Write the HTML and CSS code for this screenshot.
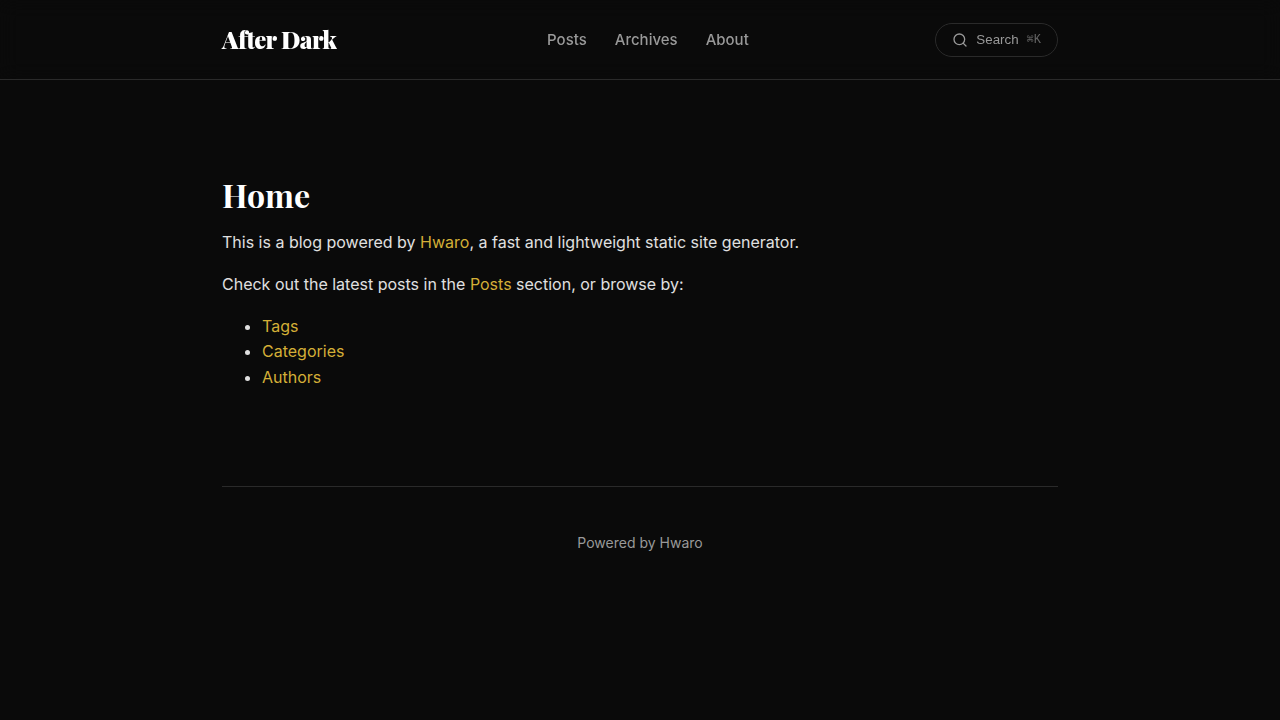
FILE: index.html
```html
<!DOCTYPE html>
<html lang="en">
<head>
    <meta charset="UTF-8">
    <meta name="viewport" content="width=device-width, initial-scale=1.0">
    <title>Home - After Dark</title>
    <link rel="stylesheet" href="styles.css">
</head>
<body>
    <header class="site-header">
        <div class="header-inner">
            <a href="#" class="site-title">After Dark</a>
            <nav class="site-nav">
                <a href="#posts">Posts</a>
                <a href="#archives">Archives</a>
                <a href="#about">About</a>
            </nav>
            <button type="button" class="search-btn">
                <svg width="16" height="16" viewBox="0 0 24 24" fill="none" stroke="currentColor" stroke-width="2" stroke-linecap="round" stroke-linejoin="round" aria-hidden="true">
                    <circle cx="11" cy="11" r="8"></circle>
                    <path d="m21 21-4.35-4.35"></path>
                </svg>
                <span>Search</span>
                <kbd>⌘K</kbd>
            </button>
        </div>
    </header>

    <div class="container">
        <main class="site-main">
            <h1>Home</h1>
            <p>This is a blog powered by <a href="#hwaro">Hwaro</a>, a fast and lightweight static site generator.</p>
            <p>Check out the latest posts in the <a href="#posts">Posts</a> section, or browse by:</p>
            <ul>
                <li><a href="#tags">Tags</a></li>
                <li><a href="#categories">Categories</a></li>
                <li><a href="#authors">Authors</a></li>
            </ul>
        </main>

        <footer class="site-footer">
            <p>Powered by Hwaro</p>
        </footer>
    </div>
</body>
</html>
```
FILE: styles.css
```css
:root {
    --bg: #0a0a0a;
    --text: #e0e0e0;
    --heading: #ffffff;
    --muted: #999999;
    --faint: #666666;
    --border: #2a2a2a;
    --accent: #d4af37;
    --font-serif: "Playfair Display", "Liberation Serif", serif;
    --font-sans: Inter, sans-serif;
}

* {
    box-sizing: border-box;
}

body {
    margin: 0;
    background: var(--bg);
    color: var(--text);
    font-family: var(--font-sans);
    font-size: 16px;
    line-height: 1.6;
}

a {
    color: var(--accent);
    text-decoration: none;
}

a:hover {
    text-decoration: underline;
}

/* Header */
.site-header {
    position: sticky;
    top: 0;
    background: rgba(10, 10, 10, 0.9);
    backdrop-filter: blur(10px);
    border-bottom: 1px solid var(--border);
}

.header-inner {
    display: flex;
    align-items: center;
    justify-content: space-between;
    max-width: 900px;
    min-height: 79px;
    margin: 0 auto;
    padding: 0 32px;
}

.site-title {
    color: var(--heading);
    font-family: var(--font-serif);
    font-size: 24px;
    font-weight: 900;
    letter-spacing: -0.02em;
}

.site-nav {
    display: flex;
    gap: 28px;
    margin-left: 24px;
}

.site-nav a {
    color: var(--muted);
    font-size: 15px;
    font-weight: 500;
}

.search-btn {
    display: flex;
    align-items: center;
    gap: 8px;
    padding: 8px 16px;
    background: transparent;
    border: 1px solid var(--border);
    border-radius: 20px;
    color: var(--muted);
    cursor: pointer;
}

.search-btn kbd {
    color: var(--faint);
    font-family: "Liberation Mono", monospace;
    font-size: 12px;
}

/* Content */
.container {
    max-width: 900px;
    margin: 0 auto;
    padding: 0 32px;
}

.site-main {
    padding: 96px 0 80px;
}

h1 {
    margin: 0 0 16px;
    color: var(--heading);
    font-family: var(--font-serif);
    font-size: 32px;
    font-weight: 700;
    line-height: 1.2;
}

p,
ul {
    margin: 0 0 16px;
}

ul {
    padding-left: 40px;
}

/* Footer */
.site-footer {
    padding: 45px 0;
    border-top: 1px solid var(--border);
    color: var(--muted);
    font-size: 14px;
    text-align: center;
}

.site-footer p {
    margin: 0;
}
```
